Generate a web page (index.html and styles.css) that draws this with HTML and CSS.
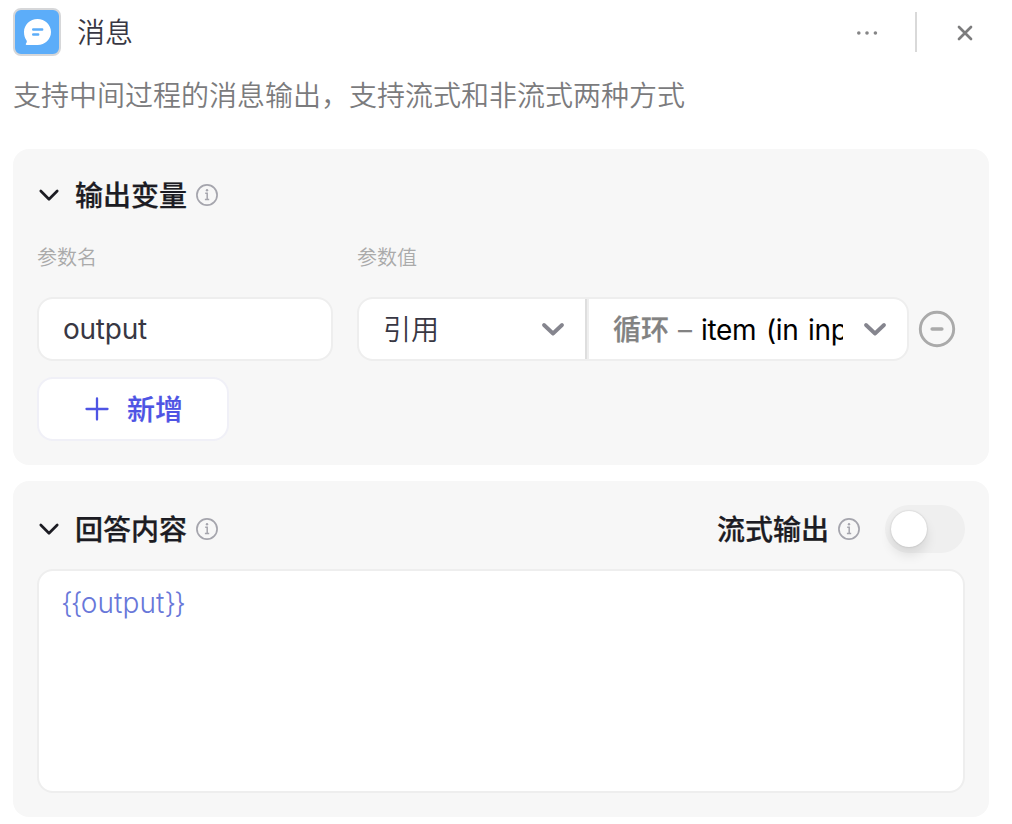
FILE: index.html
```
<!DOCTYPE html>
<html lang="zh-CN">
<head>
<meta charset="utf-8">
<title>消息</title>
<link rel="stylesheet" href="styles.css">
</head>
<body>
<div class="panel">
  <header class="header">
    <span class="logo">
      <svg width="44" height="44" viewBox="0 0 44 44" fill="none">
        <path d="M22.500 9C15 9 9 14.800 9 22c0 3.600.9 6.200 2.700 8.700.3 1-.1 1.900-.7 2.900-.5.800-.2 1.400.6 1.400H22.500C30 35 36 29.200 36 22S30 9 22.500 9Z" fill="#fff"/>
        <path d="M18.200 19.500h9M18.200 24.500h5" stroke="#5cadf9" stroke-width="2.400" stroke-linecap="round"/>
      </svg>
    </span>
    <h1 class="title">消息</h1>
    <div class="actions">
      <svg width="24" height="24" viewBox="0 0 24 24" fill="#858586"><circle cx="3.800" cy="12" r="1.800"/><circle cx="12" cy="12" r="1.800"/><circle cx="20.400" cy="12" r="1.800"/></svg>
      <span class="separator"></span>
      <svg width="24" height="24" viewBox="0 0 24 24"><path d="M6 6l12 12M18 6L6 18" stroke="#7c7c7d" stroke-width="2.700" stroke-linecap="round"/></svg>
    </div>
  </header>
  <p class="description">支持中间过程的消息输出，支持流式和非流式两种方式</p>

  <section class="card variables">
    <div class="card-head">
      <svg class="chevron" width="24" height="24" viewBox="0 0 24 24"><path d="M3.800 8L12 16.200 20.200 8" fill="none" stroke="#1c1c23" stroke-width="2.700" stroke-linecap="round" stroke-linejoin="round"/></svg>
      <h2 class="card-title">输出变量</h2>
      <svg class="info" width="24" height="24" viewBox="0 0 24 24" fill="none" stroke="#a5a5ad"><circle cx="12" cy="12" r="10.100" stroke-width="1.700"/><path d="M10.200 10.200h2v6M9.900 16.500h4.300" stroke-width="1.500"/><circle cx="12" cy="7.300" r="1.200" fill="#a5a5ad" stroke="none"/></svg>
    </div>
    <div class="grid labels"><span>参数名</span><span>参数值</span></div>
    <div class="grid row">
      <div class="field">output</div>
      <div class="picker">
        <div class="select kind">
          <span class="kind-text">引用</span>
          <svg width="24" height="24" viewBox="0 0 24 24"><path d="M3 8l9 8.500L21 8" fill="none" stroke="#85858e" stroke-width="3.800" stroke-linecap="round" stroke-linejoin="round"/></svg>
        </div>
        <span class="divider"></span>
        <div class="select source">
          <span class="source-text"><span class="node">循环</span><span class="dash">–</span><span class="path">item (in input)</span></span>
          <svg width="24" height="24" viewBox="0 0 24 24"><path d="M3 8l9 8.500L21 8" fill="none" stroke="#85858e" stroke-width="3.800" stroke-linecap="round" stroke-linejoin="round"/></svg>
        </div>
      </div>
      <svg width="38" height="38" viewBox="0 0 38 38" fill="none" stroke="#aaa" stroke-linecap="round"><circle cx="19" cy="19" r="16.700" stroke-width="2.900"/><path d="M14.200 19h9.600" stroke-width="3.600"/></svg>
    </div>
    <div class="add">
      <svg width="24" height="24" viewBox="0 0 24 24"><path d="M12 1.500v21M1.500 12h21" stroke="#4e54e4" stroke-width="2.300" stroke-linecap="round"/></svg>
      <span>新增</span>
    </div>
  </section>

  <section class="card answer">
    <div class="card-head">
      <svg class="chevron" width="24" height="24" viewBox="0 0 24 24"><path d="M3.800 8L12 16.200 20.200 8" fill="none" stroke="#1c1c23" stroke-width="2.700" stroke-linecap="round" stroke-linejoin="round"/></svg>
      <h2 class="card-title">回答内容</h2>
      <svg class="info" width="24" height="24" viewBox="0 0 24 24" fill="none" stroke="#a5a5ad"><circle cx="12" cy="12" r="10.100" stroke-width="1.700"/><path d="M10.200 10.200h2v6M9.900 16.500h4.300" stroke-width="1.500"/><circle cx="12" cy="7.300" r="1.200" fill="#a5a5ad" stroke="none"/></svg>
      <div class="stream">
        <h2 class="card-title">流式输出</h2>
        <svg class="info" width="24" height="24" viewBox="0 0 24 24" fill="none" stroke="#a5a5ad"><circle cx="12" cy="12" r="10.100" stroke-width="1.700"/><path d="M10.200 10.200h2v6M9.900 16.500h4.300" stroke-width="1.500"/><circle cx="12" cy="7.300" r="1.200" fill="#a5a5ad" stroke="none"/></svg>
        <span class="switch"><span class="knob"></span></span>
      </div>
    </div>
    <div class="editor"><span class="brace">{{</span>output<span class="brace">}}</span></div>
  </section>
</div>
</body>
</html>
```
FILE: styles.css
```
* { box-sizing: border-box; }
body {
  margin: 0;
  background: #fff;
  font-family: Inter, "Noto Sans CJK SC", sans-serif;
  font-size: 28px;
  font-weight: 350;
  color: #383743;
}
svg { display: block; flex: none; }
h1, h2, p { margin: 0; }
.panel {
  width: 1012px;
  height: 824px;
  padding: 8px 23px 0 13px;
  overflow: hidden;
}
.header { display: flex; align-items: center; height: 48px; }
.logo {
  width: 48px;
  height: 48px;
  border: 2px solid #d6d7d9;
  border-radius: 8px;
  background: #5cadf9;
  overflow: hidden;
}
.title {
  margin-left: 16px;
  padding-top: 2px;
  font-size: 28px;
  font-weight: 350;
  line-height: 48px;
}
.actions { display: flex; align-items: center; margin-left: auto; padding-right: 12px; }
.actions svg { margin-top: 1px; }
.separator { width: 2px; height: 40px; margin: 0 36px; background: #d9d9d9; }
.description {
  height: 40px;
  margin-top: 20px;
  line-height: 40px;
  color: #7b7b7d;
  white-space: nowrap;
}
.card {
  padding: 24px;
  border-radius: 16px;
  background: #f7f7f7;
}
.variables { height: 316px; margin-top: 33px; }
.answer { height: 336px; margin-top: 16px; }
.card-head { display: flex; align-items: center; height: 44px; }
.answer .card-head { height: 48px; }
.card-title {
  padding-top: 2px;
  font-size: 28px;
  font-weight: 500;
  line-height: 42px;
  color: #1c1c23;
  -webkit-text-stroke: .25px currentColor;
}
.card-head > .card-title { margin-left: 14px; }
.info { margin-left: 8px; }
.stream { display: flex; align-items: center; margin-left: auto; }
.grid {
  display: grid;
  grid-template-columns: 296px 552px 38px;
  column-gap: 24px;
  align-items: center;
}
.labels { height: 32px; margin-top: 24px; padding-top: 1px; font-size: 20px; line-height: 32px; color: #aaa; }
.row { margin-top: 24px; }
.row > svg { margin-left: -15px; }
.field, .picker, .add, .editor {
  border: 2px solid #eee;
  border-radius: 16px;
  background: #fff;
}
.field { height: 64px; padding-left: 24px; line-height: 60px; font-weight: 400; letter-spacing: -.25px; }
.picker { display: flex; height: 64px; overflow: hidden; }
.select { display: flex; align-items: center; justify-content: space-between; line-height: 60px; }
.kind { width: 226px; padding: 0 20px 0 24px; }
.kind-text { padding-top: 2px; }
.divider { width: 4px; border-left: 2px solid #dedede; border-right: 2px solid #eee; }
.source { flex: 1; padding: 0 20px 0 24px; }
.source-text { width: 230px; padding-top: 1px; overflow: hidden; white-space: nowrap; color: #000; }
.node { font-weight: 500; color: #828282; -webkit-text-stroke: .25px currentColor; }
.dash { margin: 0 9px 0 9px; font-weight: 400; color: #828282; }
.path { font-weight: 400; letter-spacing: -.3px; word-spacing: 2px; }
.add {
  display: flex;
  align-items: center;
  width: 192px;
  height: 64px;
  margin-top: 16px;
  padding-left: 46px;
  gap: 18px;
  border-color: #f0f0f7;
  font-weight: 500;
  line-height: 60px;
  color: #4e54e4;
}
.add span { padding-top: 2px; -webkit-text-stroke: .2px currentColor; }
.switch {
  width: 80px;
  height: 48px;
  margin-left: 24px;
  padding: 6px;
  border-radius: 24px;
  background: #efefef;
}
.knob {
  display: block;
  width: 36px;
  height: 36px;
  border-radius: 50%;
  background: #fff;
  box-shadow: 0 8px 12px rgba(0, 0, 0, .1), 0 0 2px rgba(0, 0, 0, .2);
}
.editor {
  height: 224px;
  margin-top: 16px;
  padding: 12px 22px;
  line-height: 40px;
  letter-spacing: .1px;
  color: #6877d9;
}
.brace { letter-spacing: -1.8px; }
```
